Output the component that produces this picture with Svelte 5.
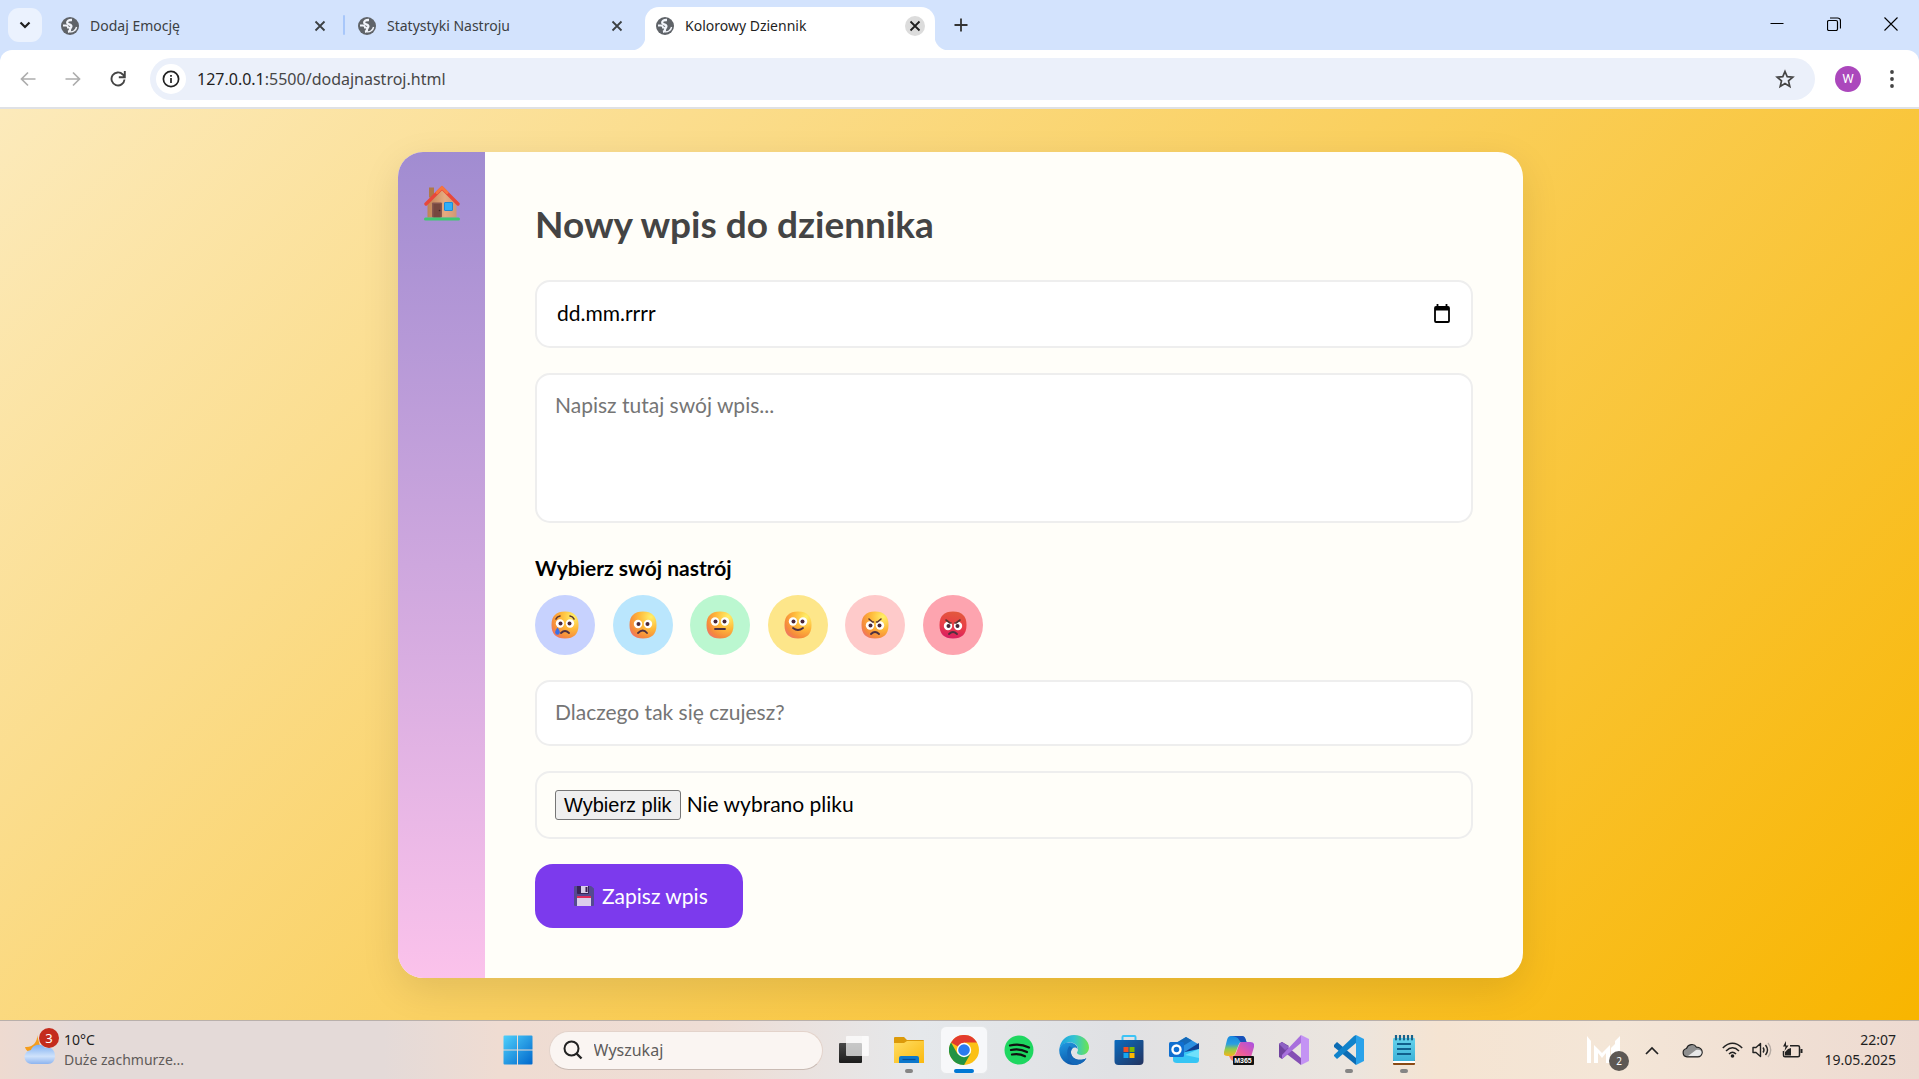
<script lang="ts">
  type Face = { name: string; color: string; skin: string; mouth: string; eyeY: number; brows?: string; tear?: boolean };

  const tabs = [
    { title: 'Dodaj Emocję', active: false },
    { title: 'Statystyki Nastroju', active: false },
    { title: 'Kolorowy Dziennik', active: true }
  ];

  const moods: Face[] = [
    { name: 'Płacz', color: '#c7d2fe', skin: 'skin', mouth: 'M10 22q4-4 8 0', eyeY: 12.5, brows: 'M5 8q1-2.500 4-3M23 8q-1-2.500-4-3', tear: true },
    { name: 'Smutek', color: '#bae6fd', skin: 'skin', mouth: 'M9 22q5-5 9 0', eyeY: 13 },
    { name: 'Neutralnie', color: '#bbf7d0', skin: 'skin', mouth: 'M9 18h10', eyeY: 10.5 },
    { name: 'Radość', color: '#fde68a', skin: 'skin', mouth: 'M9 17q5 4 10 0', eyeY: 10.5 },
    { name: 'Złość', color: '#fecaca', skin: 'skin', mouth: 'M10 23q4-4 8 0', eyeY: 14.5, brows: 'M8 8l3.500 3h1M20 8l-3.500 3h-1' },
    { name: 'Wściekłość', color: '#fda4af', skin: 'skin-red', mouth: 'M10 23q4-4 8 0', eyeY: 15, brows: 'M7 9l4 3h1M21 9l-4 3h-1' }
  ];

  const apps = [
    { name: 'Widok zadań', id: 'tasks' },
    { name: 'Eksplorator plików', id: 'folder', open: true },
    { name: 'Google Chrome', id: 'chrome', active: true },
    { name: 'Spotify', id: 'spotify' },
    { name: 'Microsoft Edge', id: 'edge' },
    { name: 'Microsoft Store', id: 'store' },
    { name: 'Outlook', id: 'outlook' },
    { name: 'Microsoft 365', id: 'm365' },
    { name: 'Visual Studio', id: 'vs' },
    { name: 'Visual Studio Code', id: 'code', open: true },
    { name: 'Notatnik', id: 'notepad', open: true }
  ];

  let selected = $state('');
</script>

<svg class="defs" width="0" height="0" aria-hidden="true">
  <defs>
    <radialGradient id="skin" cx="0.8" cy="0.2" r="1">
      <stop offset="0" stop-color="#fff06a" /><stop offset="0.45" stop-color="#ffb93a" />
      <stop offset="0.8" stop-color="#f58a3c" /><stop offset="1" stop-color="#ee6f70" />
    </radialGradient>
    <linearGradient id="skin-red" x1="0.6" y1="0" x2="0.4" y2="1">
      <stop offset="0" stop-color="#e25a3c" /><stop offset="0.55" stop-color="#ea3c48" /><stop offset="1" stop-color="#d81e63" />
    </linearGradient>
    <linearGradient id="win" x1="0" y1="0" x2="1" y2="1">
      <stop offset="0" stop-color="#4fd0fb" /><stop offset="1" stop-color="#0067cc" />
    </linearGradient>
    <linearGradient id="cloud" x1="0" y1="0" x2="0" y2="1">
      <stop offset="0" stop-color="#7fb0f2" /><stop offset="0.6" stop-color="#cfe2fb" /><stop offset="1" stop-color="#8db4ef" />
    </linearGradient>
    <linearGradient id="wall" x1="0" y1="0" x2="1" y2="0">
      <stop offset="0" stop-color="#bd8355" /><stop offset="0.6" stop-color="#e6ab80" /><stop offset="1" stop-color="#cf9876" />
    </linearGradient>
    <linearGradient id="dark" x1="0" y1="0" x2="0" y2="1">
      <stop offset="0" stop-color="#484848" /><stop offset="1" stop-color="#1c1c1c" />
    </linearGradient>
    <linearGradient id="fold" x1="0" y1="0" x2="1" y2="1">
      <stop offset="0" stop-color="#ffdd63" /><stop offset="1" stop-color="#fbb90f" />
    </linearGradient>
    <linearGradient id="edge-a" x1="0" y1="0" x2="1" y2="0">
      <stop offset="0" stop-color="#1ca0e0" /><stop offset="0.5" stop-color="#33c3d2" /><stop offset="1" stop-color="#6be54f" />
    </linearGradient>
    <linearGradient id="edge-b" x1="0" y1="0" x2="0.5" y2="1">
      <stop offset="0" stop-color="#219be3" /><stop offset="1" stop-color="#0b55a8" />
    </linearGradient>
    <linearGradient id="bag" x1="0" y1="0" x2="1" y2="1">
      <stop offset="0" stop-color="#0a6cc0" /><stop offset="1" stop-color="#24335f" />
    </linearGradient>
    <linearGradient id="m-a" x1="0" y1="0" x2="0" y2="1">
      <stop offset="0" stop-color="#1689e0" /><stop offset="0.4" stop-color="#2a9ee0" /><stop offset="0.65" stop-color="#8fcb4d" /><stop offset="1" stop-color="#f5b51c" />
    </linearGradient>
    <linearGradient id="m-b" x1="1" y1="0" x2="0" y2="1">
      <stop offset="0" stop-color="#a650e6" /><stop offset="0.5" stop-color="#ea5ba0" /><stop offset="1" stop-color="#ff8a58" />
    </linearGradient>
    <linearGradient id="note" x1="0" y1="0" x2="0" y2="1">
      <stop offset="0" stop-color="#64d3ec" /><stop offset="1" stop-color="#3cb2d8" />
    </linearGradient>
  </defs>
</svg>

{#snippet cross()}
  <svg width="12" height="12" viewBox="0 0 12 12" aria-hidden="true"><path d="M1.500 1.500l9 9m0-9l-9 9" stroke="currentColor" stroke-width="1.800" /></svg>
{/snippet}

{#snippet globe()}
  <svg class="globe" width="18" height="18" viewBox="0 0 18 18" aria-hidden="true">
    <circle cx="9" cy="9" r="9" fill="#5f6368" />
    <path d="M11 3C7.500 2.800 6 4 6.200 5.800 6.500 7.800 9.500 7 10.300 8.800c.7 1.800-1.300 1.900-1.300 3.700 0 1-.8 2-2 2.300" fill="none" stroke="#f2f5fb" stroke-width="2.300" />
    <path d="M2 8.500h3q2 0 2 2.200h2" fill="none" stroke="#f2f5fb" stroke-width="1.800" />
    <path d="M9 14.800c3 .4 6-1.600 6.600-4.800" fill="none" stroke="#f2f5fb" stroke-width="1.400" />
  </svg>
{/snippet}

{#snippet face(m: Face)}
  <svg width="28" height="28" viewBox="0 0 28 28" aria-hidden="true">
    <path d="M14 0.500C23 0.500 27.500 5 27.500 14S23 27.500 14 27.500 0.500 23 0.500 14 5 0.500 14 0.500z" fill="url(#{m.skin})" />
    <circle cx="9" cy={m.eyeY} r="4.200" fill="#fff" /><circle cx="19" cy={m.eyeY} r="4.200" fill="#fff" />
    <circle cx="9.500" cy={m.eyeY} r="2" fill="#4a2638" /><circle cx="18.500" cy={m.eyeY} r="2" fill="#4a2638" />
    <path d={m.mouth} fill="none" stroke="#4e3040" stroke-width="1.800" stroke-linecap="round" />
    {#if m.brows}<path d={m.brows} fill="none" stroke="#5a3330" stroke-width="1.600" stroke-linecap="round" stroke-linejoin="round" />{/if}
    {#if m.tear}<path d="M6.500 16.500c1.300 1.800 2.300 3.200 2.300 4.700a2.300 2.500 0 0 1-4.600 0c0-1.500 1-2.900 2.300-4.700z" fill="#3a6fe8" />{/if}
  </svg>
{/snippet}

{#snippet appIcon(id: string)}
  <svg width="30" height="30" viewBox="0 0 30 30" aria-hidden="true">
    {#if id === 'tasks'}
      <rect x="0" y="8" width="23" height="20" rx="1" fill="url(#dark)" />
      <rect x="7" y="1" width="23" height="20" rx="1" fill="#fff" fill-opacity="0.700" />
      <path d="M23 1h6v20h-6z" fill="#fff" fill-opacity="0.400" />
    {:else if id === 'folder'}
      <path d="M0 3q0-1 1-1h9l3 3h16q1 0 1 1v5H0z" fill="#dc9a0a" />
      <path d="M0 8h10l3-2h17v22H0z" fill="url(#fold)" />
      <path d="M5 28v-5q0-2 2-2h16q2 0 2 2v5z" fill="#0d78cc" /><path d="M8.500 24.500h13" stroke="#074d95" stroke-width="1.200" />
    {:else if id === 'chrome'}
      <circle cx="15" cy="15" r="15" fill="#fbc116" />
      <path d="M15 15L2 7.500A15 15 0 0 1 28 7.500H15z" fill="#e33b2e" />
      <path d="M2 7.500A15 15 0 0 0 15 30l6.500-11.200L15 15 8.500 18.800z" fill="#229342" />
      <circle cx="15" cy="15" r="7.200" fill="#fff" /><circle cx="15" cy="15" r="5.800" fill="#2a7bf0" />
    {:else if id === 'spotify'}
      <circle cx="15" cy="15" r="14.500" fill="#1ed760" />
      <path d="M6 10.500q10-2.500 19 2M7 15q8.500-2 16 2M8 19.500q7-1.500 13 1.800" fill="none" stroke="#111" stroke-width="2.200" stroke-linecap="round" />
    {:else if id === 'edge'}
      <path d="M0.500 14C1 6 7 0 15 0c9 0 15 6 15 12.500 0 4.500-3.500 7.500-7.500 7.500-3 0-4.500-1-4.500-2.200 0-1 1-1.500 1-3.800C19 10 14 6.500 8.500 7.500 4 8.500 1.500 11 .5 14z" fill="url(#edge-a)" />
      <path d="M.3 14C2 9 6 7 10 7.500c5 0 9 3 8.500 7-1-3-6-2.500-6.500 2C11.500 22 17 26 24 24.500c1.500-.3 2.500-1 3.300-1.300C25 27.500 20.500 30 15 30 6 30-.5 22.500.3 14z" fill="url(#edge-b)" />
      <path d="M10.500 11C6.500 15 7.500 26 15 30c5 0 9.500-2.500 12.300-6.800-1 .4-2 1-3.300 1.300-7 1.500-12.500-2.500-12-8 .2-1.500.8-2.600 1.600-3.200z" fill="#1468b8" />
    {:else if id === 'store'}
      <path d="M8.500 8V2q0-1 1-1h11q1 0 1 1v6" fill="none" stroke="#3cc3f5" stroke-width="2" />
      <path d="M.5 6q0-1 1-1h27q1 0 1 1v20q0 4-4 4h-21q-4 0-4-4z" fill="url(#bag)" />
      <path d="M9.500 12h5v5h-5z" fill="#f25022" /><path d="M15.500 12h5v5h-5z" fill="#7fba00" />
      <path d="M9.500 18h5v5h-5z" fill="#16a7ef" /><path d="M15.500 18h5v5h-5z" fill="#ffb900" />
    {:else if id === 'outlook'}
      <path d="M5 9L17 2l12 7v5L14 20H5z" fill="#2b8fe0" /><path d="M9 7l8-5 6 3.500L9 14z" fill="#1569b8" />
      <path d="M14 18L30 8v12L16 26z" fill="#103f91" />
      <path d="M4 22l12-5 14-3v11q0 3-3 3H8q-4 0-4-3z" fill="#36c5f4" /><path d="M16 20l14-6v9z" fill="#6fe0fb" />
      <rect x="0" y="7" width="15" height="15" rx="1.500" fill="#0f6fd0" />
      <circle cx="7.500" cy="14.500" r="4" fill="none" stroke="#fff" stroke-width="2.400" />
    {:else if id === 'm365'}
      <path d="M7 1h11q2.500 0 3.500 3l1 3h-5q-2 0-3 3l-3 8q-1 3-4 3H3q-4 0-3-4L3 5q1-4 4-4z" fill="url(#m-a)" />
      <path d="M8 1h10q2.500 0 3.500 3l1 3h-6l-2-3q-1-2-6.500-3z" fill="#1850b8" />
      <path d="M17 7h9q5 0 4 5l-3 10q-1 4-5 4H10q-3 0-4-3l-1-2h4q2 0 3-3l3-8q1-3 2-3z" fill="url(#m-b)" />
    {:else if id === 'vs'}
      <path d="M0 9l3-2 19 16v7L0 13z" fill="#8550b4" /><path d="M0 9v13l3 2 7-6-4-3 4-4-7-4z" fill="#71439f" />
      <path d="M22 0L3 20v4L22 8z" fill="#a870dd" /><path d="M22 0l8 4v22l-8 4z" fill="#c493f4" />
      <path d="M0 9l3-2 7 5-4 3z" fill="#8e62c4" />
    {:else if id === 'code'}
      <path d="M0 10l3-3 19 16v7L0 12z" fill="#0c6cb4" /><path d="M22 0v8L3 24l-3-3v-1L20 1z" fill="#1183cb" />
      <path d="M22 0l8 4v22l-8 4z" fill="#2aa2ea" />
    {:else}
      <rect x="4" y="24" width="22" height="6" rx="1" fill="#8a4a14" /><rect x="4" y="26" width="22" height="2" fill="#fff" />
      <rect x="4" y="3" width="22" height="23" rx="1" fill="url(#note)" />
      <path d="M7 0.500v4M11 0.500v4M15 0.500v4M19 0.500v4M23 0.500v4" stroke="#18638c" stroke-width="2.200" stroke-linecap="round" />
      <path d="M8 9h14M8 14h14M8 19h14" stroke="#10608d" stroke-width="1.800" />
    {/if}
  </svg>
{/snippet}

<div class="screen">
  <header>
    <nav class="tabstrip" aria-label="Karty">
      <button class="tab-list" aria-label="Wyszukaj karty">
        <svg width="12" height="8" viewBox="0 0 12 8" aria-hidden="true"><path d="M1.500 1.500L6 6l4.500-4.500" fill="none" stroke="#1f1f1f" stroke-width="2.200" /></svg>
      </button>
      {#each tabs as tab, i}
        <div class="tab" class:active={tab.active} class:divided={i === 0}>
          {@render globe()}
          <span class="tab-title">{tab.title}</span>
          <button class="tab-close" aria-label="Zamknij kartę">{@render cross()}</button>
        </div>
      {/each}
      <button class="plain new-tab" aria-label="Nowa karta">
        <svg width="14" height="14" viewBox="0 0 14 14" aria-hidden="true"><path d="M7 .5v13M.5 7h13" stroke="#333" stroke-width="1.800" /></svg>
      </button>
      <div class="window-controls">
        <button class="plain" aria-label="Minimalizuj"><svg width="14" height="14" viewBox="0 0 14 14"><path d="M.5 6.500h13" stroke="#000" /></svg></button>
        <button class="plain" aria-label="Przywróć"><svg width="14" height="14" viewBox="0 0 14 14"><rect x=".5" y="3.500" width="10" height="10" rx="1.500" fill="none" stroke="#000" stroke-width="1.200" /><path d="M3 1h7.500q3 0 3 3v7.500" fill="none" stroke="#000" stroke-width="1.200" /></svg></button>
        <button class="plain" aria-label="Zamknij"><svg width="14" height="14" viewBox="0 0 14 14"><path d="M.5.5l13 13m0-13l-13 13" stroke="#000" stroke-width="1.100" /></svg></button>
      </div>
    </nav>
    <div class="toolbar">
      <button class="plain nav faded" aria-label="Wstecz"><svg width="16" height="16" viewBox="0 0 16 16"><path d="M15.500 8H2M8 1.500L1.500 8 8 14.500" fill="none" stroke="currentColor" stroke-width="1.700" /></svg></button>
      <button class="plain nav faded" aria-label="Dalej"><svg width="16" height="16" viewBox="0 0 16 16"><path d="M.5 8H14M8 1.500L14.500 8 8 14.500" fill="none" stroke="currentColor" stroke-width="1.700" /></svg></button>
      <button class="plain nav" aria-label="Odśwież"><svg width="16" height="16" viewBox="0 0 16 16"><path d="M14.500 8.500A6.500 6.500 0 1 1 12.800 3.500L14.500 5.500M14.800 0v6.200H8.800" fill="none" stroke="currentColor" stroke-width="1.900" /></svg></button>
      <div class="omnibox">
        <button class="info" aria-label="Informacje o witrynie"><svg width="18" height="18" viewBox="0 0 18 18"><circle cx="9" cy="9" r="7.600" fill="none" stroke="#222" stroke-width="1.700" /><path d="M9 8v5M9 5v1.800" stroke="#222" stroke-width="1.700" /></svg></button>
        <span class="url"><b>127.0.0.1</b>:5500/dodajnastroj.html</span>
        <button class="plain star" aria-label="Dodaj do zakładek"><svg width="20" height="20" viewBox="0 0 20 20"><path d="M10 2.500l2.200 5.200 5.600.5-4.300 3.700 1.300 5.500-4.800-2.900-4.800 2.900 1.300-5.500L2.200 8.200l5.600-.5z" fill="none" stroke="#444" stroke-width="1.700" /></svg></button>
      </div>
      <button class="avatar" aria-label="Profil">W</button>
      <button class="plain menu" aria-label="Menu"><svg width="6" height="18" viewBox="0 0 6 18"><circle cx="3" cy="2" r="1.900" fill="#444" /><circle cx="3" cy="9" r="1.900" fill="#444" /><circle cx="3" cy="16" r="1.900" fill="#444" /></svg></button>
    </div>
  </header>

  <main>
    <div class="card">
      <aside>
        <a href="#home" aria-label="Strona główna">
          <svg width="36" height="36" viewBox="0 0 36 36" aria-hidden="true">
            <path d="M5 2.500h5v10H5z" fill="#b07848" />
            <path d="M3.500 18L18 4l14.500 14v14.500h-29z" fill="url(#wall)" />
            <path d="M2 19L18 3l16 16" fill="none" stroke="#e8483a" stroke-width="3.400" stroke-linecap="round" stroke-linejoin="round" />
            <path d="M13 7.500L18 2.500l5 5" fill="none" stroke="#f77540" stroke-width="3" stroke-linecap="round" />
            <rect x="8" y="17.500" width="10" height="15" rx="1" fill="#87564f" /><path d="M9.500 19h7v13.500h-7z" fill="#76483f" /><circle cx="15.500" cy="25.500" r=".8" fill="#3f2422" />
            <rect x="20.500" y="17.500" width="8" height="8" rx=".5" fill="#2fb0f8" stroke="#1d8bd8" />
            <rect x="0" y="32.500" width="36" height="3" rx="1.500" fill="#3fc870" />
          </svg>
        </a>
      </aside>
      <form onsubmit={(e) => e.preventDefault()}>
        <h1>Nowy wpis do dziennika</h1>
        <div class="field date">
          <input type="text" placeholder="dd.mm.rrrr" aria-label="Data wpisu" />
          <button type="button" class="plain" aria-label="Pokaż kalendarz">
            <svg width="18" height="20" viewBox="0 0 18 20"><path d="M4.500 0v3M13.500 0v3" stroke="#000" stroke-width="1.800" /><rect x="2" y="3" width="14" height="15" rx="1" fill="none" stroke="#000" stroke-width="1.800" /><path d="M2 3h14v3.500H2z" /></svg>
          </button>
        </div>
        <textarea class="field" placeholder="Napisz tutaj swój wpis..." aria-label="Treść wpisu"></textarea>
        <fieldset>
          <legend>Wybierz swój nastrój</legend>
          <div class="moods">
            {#each moods as m}
              <button type="button" class="mood" style:background={m.color} aria-label={m.name} aria-pressed={selected === m.name} onclick={() => (selected = m.name)}>{@render face(m)}</button>
            {/each}
          </div>
        </fieldset>
        <input class="field reason" type="text" placeholder="Dlaczego tak się czujesz?" aria-label="Powód nastroju" />
        <label class="field file">
          <input type="file" />
          <span class="pick">Wybierz plik</span>
          <span>Nie wybrano pliku</span>
        </label>
        <button class="save" type="submit">
          <svg width="20" height="20" viewBox="0 0 20 20" aria-hidden="true">
            <path d="M1 0h16l3 2.500V19q0 1-1 1H1q-1 0-1-1V1q0-1 1-1z" fill="#544a90" />
            <path d="M3 0h12v7q0 1-1 1H4q-1 0-1-1z" fill="#3a2459" /><path d="M7 0h7v7H7z" fill="#d8cce8" /><path d="M11.500 1h2v5h-2z" fill="#3a1d50" />
            <path d="M3 10h14v10H3z" fill="#dccdec" /><path d="M3 10h14v2H3z" fill="#e02a5c" />
          </svg>
          Zapisz wpis
        </button>
      </form>
    </div>
  </main>

  <footer>
    <button class="plain weather">
      <span class="weather-icon">
        <svg width="32" height="36" viewBox="0 0 32 36" aria-hidden="true">
          <path d="M13 5c1 6-4 13-12 12 1 4 5 6 9 6h8z" fill="#f59d1c" />
          <path d="M8 34a7 7 0 0 1-1-14c2-6 11-7 14-2 6-2 10 2 10 8 0 5-3 8-7 8z" fill="url(#cloud)" />
        </svg>
        <span class="badge">3</span>
      </span>
      <span class="weather-text">10°C<br /><small>Duże zachmurze...</small></span>
    </button>
    <div class="center">
      <button class="plain start" aria-label="Start">
        <svg width="30" height="30" viewBox="0 0 30 30" aria-hidden="true"><path d="M1.500.5H14v14H.5v-13q0-1 1-1zM15 .5h13.500q1 0 1 1v13H15zM.5 15.500H14v14H1.500q-1 0-1-1zM15 15.500h14.500v13q0 1-1 1H15z" fill="url(#win)" /></svg>
      </button>
      <label class="search">
        <svg width="20" height="20" viewBox="0 0 20 20" aria-hidden="true"><circle cx="8.500" cy="8.500" r="7" fill="none" stroke="#222" stroke-width="2" /><path d="M13.500 13.500l5 5" stroke="#222" stroke-width="2.400" /></svg>
        <input type="text" placeholder="Wyszukaj" aria-label="Wyszukaj" />
      </label>
      <div class="apps">
        {#each apps as app}
          <button class="app" class:active={app.active} class:open={app.open} aria-label={app.name}>
            {@render appIcon(app.id)}
            {#if app.id === 'm365'}<span class="tag">M365</span>{/if}
          </button>
        {/each}
      </div>
    </div>
    <div class="tray">
      <span class="mail">
        <svg width="34" height="28" viewBox="0 0 34 28" aria-hidden="true"><path d="M0 0l4 5v22H0zM7 9l8 8 8-8v18h-4V17l-4 5-4-5v10H7zM24 12l4-4V5l5-5v27h-9z" fill="#fff" /></svg>
        <span class="count">2</span>
      </span>
      <svg class="chevron" width="14" height="9" viewBox="0 0 14 9" aria-hidden="true"><path d="M1 8l6-6 6 6" fill="none" stroke="#222" stroke-width="1.700" /></svg>
      <svg class="onedrive" width="21" height="15" viewBox="0 0 21 15" aria-hidden="true"><path d="M5 13.800a4.200 4.200 0 0 1-.5-8.300C6 1 12 0 14.500 4.200c3.500.1 5.700 2.300 5.700 5 0 2.600-2 4.600-4.500 4.600z" fill="#8f8f8f" stroke="#222" stroke-width="1.200" /><path d="M6 13l8-6c4-1 6 1 5.500 3-.4 2-2 3-4 3z" fill="#e8e8e8" /></svg>
      <svg width="21" height="16" viewBox="0 0 21 16" aria-hidden="true"><path d="M.8 6q9.700-9.500 19.400 0M4 9q6.500-6.500 13 0M7 12q3.500-3.500 7 0" fill="none" stroke="#222" stroke-width="1.500" /><circle cx="10.500" cy="14" r="1.800" fill="#222" /></svg>
      <svg width="21" height="16" viewBox="0 0 21 16" aria-hidden="true"><path d="M1 5.500h3l4.500-4v13l-4.500-4H1z" fill="none" stroke="#222" stroke-width="1.400" stroke-linejoin="round" /><path d="M11 5.500q2 2.500 0 5M13.500 3q4 5 0 10" fill="none" stroke="#222" stroke-width="1.400" /><path d="M16 1q5.500 7 0 14" fill="none" stroke="#b5aaa3" stroke-width="1.300" /></svg>
      <svg width="21" height="18" viewBox="0 0 21 18" aria-hidden="true"><path d="M8 4.800h8q1.500 0 1.500 1.500v8q0 1.500-1.500 1.500H3q-1.500 0-1.500-1.500V10" fill="none" stroke="#222" stroke-width="1.500" /><path d="M3 14.500V11l3-3 3-1v7.500zM18.500 8h2v4h-2zM4 0L1 5.500h2.500L2.500 10l4-5.500H4z" fill="#222" /></svg>
      <time>22:07<br />19.05.2025</time>
    </div>
  </footer>
</div>

<style>
  :global(body) { margin: 0; }
  :global(*) { box-sizing: border-box; }
  .defs { position: absolute; }
  .screen { min-height: 100vh; display: flex; flex-direction: column; font-family: "Noto Sans", "Open Sans", sans-serif; color: #1f1f1f; }
  button, input, textarea { font: inherit; color: inherit; }
  svg { display: block; flex: none; }
  button { cursor: pointer; }
  .plain { border: 0; padding: 0; background: none; display: flex; align-items: center; justify-content: center; }

  header { background: #d3e3fd; border-bottom: 2px solid #dfe1e5; }
  .tabstrip { display: flex; align-items: flex-end; height: 50px; padding-left: 8px; }
  .tab-list { width: 34px; height: 34px; margin: 0 8px 8px 0; border: 0; border-radius: 11px; background: #ebf2fe; display: flex; align-items: center; justify-content: center; padding: 0; }
  .tab { position: relative; flex: 0 1 297px; min-width: 0; height: 43px; padding: 0 11px 6px; display: flex; align-items: center; font-size: 14px; color: #3c4043; }
  .tab.active { flex-basis: 290px; margin-left: 1px; background: #fff; border-radius: 14px 14px 0 0; padding: 0 10px 6px 11px; color: #1f1f1f; }
  .tab.active::before, .tab.active::after { content: ""; position: absolute; bottom: 0; width: 14px; height: 14px; }
  .tab.active::before { right: 100%; background: radial-gradient(circle at 0 0, transparent 14px, #fff 15px); }
  .tab.active::after { left: 100%; background: radial-gradient(circle at 100% 0, transparent 14px, #fff 15px); }
  .tab.divided::after { content: ""; position: absolute; right: 2px; top: 8px; width: 2px; height: 20px; background: #a8c7fa; border-radius: 1px; }
  .tab-title { flex: 1; margin-left: 11px; white-space: nowrap; overflow: hidden; }
  .tab-close { width: 20px; height: 20px; margin-right: 6px; padding: 0; border: 0; border-radius: 50%; background: none; display: flex; align-items: center; justify-content: center; }
  .active .tab-close { background: #dcdcdc; margin-right: 0; }
  .new-tab { width: 34px; height: 34px; margin: 0 0 8px 9px; }
  .window-controls { display: flex; margin-left: auto; align-self: stretch; }
  .window-controls button { width: 57px; height: 48px; }

  .toolbar { display: flex; align-items: center; height: 57px; background: #fff; border-radius: 12px 12px 0 0; padding: 0 12px 0 5px; }
  .nav { width: 45px; height: 40px; color: #444; }
  .faded { color: #adadad; }
  .omnibox { flex: 1; display: flex; align-items: center; height: 42px; margin-left: 10px; border-radius: 21px; background: #ebf0fa; }
  .info { width: 30px; height: 30px; margin-left: 6px; padding: 0; border: 0; border-radius: 50%; background: #fff; display: flex; align-items: center; justify-content: center; }
  .url { flex: 1; margin-left: 11px; font-size: 16px; color: #474747; }
  .url b { font-weight: 400; color: #1f1f1f; }
  .star { margin-right: 20px; }
  .avatar { width: 26px; height: 26px; margin-left: 20px; padding: 0; border: 0; border-radius: 50%; background: #ab47bc; color: #fff; font: 13px Roboto, sans-serif; }
  .menu { width: 30px; height: 40px; margin-left: 16px; }

  main { flex: 1; display: flex; align-items: center; justify-content: center; padding: 42px 24px 42px 26px; background: linear-gradient(135deg, #fceabb, #f8b500); font-family: Lato, "Open Sans", sans-serif; font-size: 21px; color: #000; }
  .card { display: flex; width: 100%; max-width: 1125px; border-radius: 25px; overflow: hidden; background: #fffef9; box-shadow: 0 12px 38px rgba(0, 0, 0, 0.1); }
  aside { width: 87px; padding-top: 33px; background: linear-gradient(#a18cd1, #fbc2eb); }
  aside a { display: flex; justify-content: center; }
  form { flex: 1; min-width: 0; padding: 50px; display: flex; flex-direction: column; align-items: stretch; gap: 25px; }
  h1 { margin: 0 0 9px; font-size: 37px; line-height: 44px; font-weight: 700; color: #444; }
  .field { width: 100%; border: 2px solid #eee; border-radius: 15px; background: #fff; padding: 15px 18px; line-height: 30px; display: block; outline-color: #7c3aed; }
  .date { display: flex; height: 68px; padding: 0 20px; align-items: center; }
  .date input { flex: 1; min-width: 0; border: 0; padding: 0 0 2px; outline: 0; background: none; }
  .date input::placeholder { color: #000; opacity: 1; }
  textarea.field { height: 150px; resize: none; }
  .field::placeholder { color: #757575; }
  fieldset { border: 0; margin: 0; padding: 5px 0 0; min-width: 0; }
  legend { float: left; width: 100%; padding: 0; margin-bottom: 12px; line-height: 30px; font-weight: 700; }
  .moods { clear: both; display: flex; justify-content: space-between; max-width: 448px; }
  .mood { width: 60px; height: 60px; padding: 0; border: 0; border-radius: 50%; display: flex; align-items: center; justify-content: center; }
  .reason { height: 66px; padding: 14px 18px 16px; }
  .file { display: flex; align-items: center; gap: 6px; height: 68px; background: none; }
  .file input { position: absolute; width: 1px; height: 1px; opacity: 0; }
  .file span { padding-bottom: 2px; }
  .file .pick { border: 1px solid #767676; border-radius: 3px; background: #efefef; padding: 0 8px; font-family: "Liberation Sans", sans-serif; font-size: 20px; line-height: 28px; }
  .save { align-self: flex-start; display: flex; align-items: center; gap: 8px; height: 64px; padding: 0 35px 0 39px; border: 0; border-radius: 18px; background: #7c3aed; color: #fff; }

  footer { display: flex; align-items: center; height: 59px; border-top: 1px solid #b9b0ab; background: linear-gradient(90deg, #eedad0, #e4dad8 4%, #e4dad8 20%, #efdcd2 26%, #eeddd5 37%, #e5e8eb 48%, #e0e1e4 58%, #ebe5df 70%, #f5e4d2 75%, #f4e6d7 84%, #eddad1); }
  .weather { flex: 1 1 0; justify-content: flex-start; padding-left: 24px; gap: 8px; text-align: left; }
  .weather-icon { position: relative; }
  .weather-icon svg { margin-bottom: 4px; }
  .badge, .count { position: absolute; border-radius: 50%; width: 20px; height: 20px; line-height: 20px; text-align: center; color: #fff; }
  .badge { top: -2px; right: -3px; background: #c42b1c; font-size: 13px; }
  .weather-text { font-size: 14px; line-height: 20px; white-space: nowrap; }
  small { font-size: 14px; color: #5f5a58; }
  .center { display: flex; align-items: center; margin-left: 10px; }
  .start { width: 30px; margin-right: 16px; }
  .search { display: flex; align-items: center; gap: 11px; width: 274px; height: 39px; padding: 0 13px; border-radius: 20px; background: #faf5f2; border: 1px solid #e3d3cb; border-bottom-color: #c9bbb4; }
  .search input { flex: 1; min-width: 0; border: 0; padding: 0; outline: 0; background: none; font-size: 16px; }
  .search input::placeholder { color: #5f5c5b; opacity: 1; }
  .apps { display: flex; gap: 7px; margin-left: 7px; }
  .app { position: relative; width: 48px; height: 48px; padding: 0; border: 1px solid transparent; border-radius: 6px; background: none; display: flex; align-items: center; justify-content: center; }
  .app.active { background: #f7f8fa; border-color: #e6e8ea; }
  .app.active::after, .app.open::after { content: ""; position: absolute; bottom: 0; width: 8px; height: 4px; border-radius: 2px; background: #858585; }
  .app.active::after { width: 20px; background: #0078d4; }
  .tag { position: absolute; right: 8px; bottom: 8px; width: 21px; height: 9px; border-radius: 1px; background: #111; color: #fff; font: 700 7px/9px "Liberation Sans", sans-serif; text-align: center; }
  .tray { flex: 1 1 0; display: flex; align-items: center; justify-content: flex-end; gap: 9px; padding-right: 23px; }
  .mail { position: relative; margin-right: 15px; }
  .count { right: -8px; bottom: -7px; background: #5d5854; font-size: 10px; }
  .chevron { margin-right: 14px; }
  .onedrive { margin-right: 10px; }
  time { margin-left: 12px; min-width: 72px; font-size: 14px; line-height: 20px; text-align: right; }
</style>
